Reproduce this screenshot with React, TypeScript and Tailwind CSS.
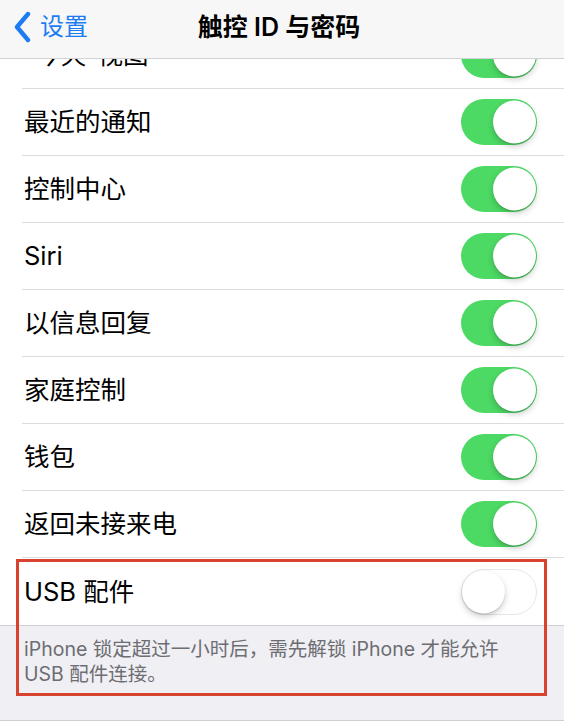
import React from 'react';

const rows: { label: string; on: boolean }[] = [
  { label: '“今天”视图', on: true },
  { label: '最近的通知', on: true },
  { label: '控制中心', on: true },
  { label: 'Siri', on: true },
  { label: '以信息回复', on: true },
  { label: '家庭控制', on: true },
  { label: '钱包', on: true },
  { label: '返回未接来电', on: true },
];

function Toggle({ on }: { on: boolean }) {
  return (
    <div
      className={`relative w-[76px] h-[46px] rounded-full ${
        on ? 'bg-[#4cd964]' : 'bg-white border-[1.5px] border-[#e6e6e6]'
      }`}
    >
      <div
        className={`absolute top-1/2 -translate-y-1/2 w-[43px] h-[43px] rounded-full bg-white shadow-[0_3px_6px_rgba(0,0,0,0.2),0_1px_1px_rgba(0,0,0,0.12)] ${
          on ? 'right-[1.5px]' : 'left-0'
        }`}
      />
    </div>
  );
}

function Row({ label, on }: { label: string; on: boolean }) {
  return (
    <div className="pl-[22px] bg-white">
      <div className="h-[67px] flex items-center justify-between pr-[27px] pl-[2px] border-b border-[#dcdcdf]">
        <span className="text-[25.5px] text-black leading-none">{label}</span>
        <Toggle on={on} />
      </div>
    </div>
  );
}

export default function App() {
  return (
    <div
      className="relative w-[564px] h-[726px] overflow-hidden bg-white flex flex-col"
      style={{ fontFamily: 'Inter, "Noto Sans CJK SC", sans-serif' }}
    >
      <div className="relative shrink-0 h-[59px] bg-[#f7f7f8] border-b border-[#d2d2d6] flex items-center pb-[4px]">
        <div className="absolute left-[13px] top-0 h-full pb-[4px] flex items-center gap-[9px] text-[#1d7cf2]">
          <svg width="18" height="32" viewBox="0 0 18 32" fill="none">
            <path d="M15 3 L4 16 L15 29" stroke="currentColor" strokeWidth="4.4" strokeLinecap="round" strokeLinejoin="round" />
          </svg>
          <span className="text-[24px] leading-none">设置</span>
        </div>
        <div className="w-full text-center text-[25px] font-semibold text-black leading-none pr-[6px]">
          触控 ID 与密码
        </div>
      </div>

      {/* list is scrolled, first row partly under the bar */}
      <div className="flex-1 overflow-hidden">
        <div className="-mt-[37px]">
          {rows.map((r) => (
            <Row key={r.label} label={r.label} on={r.on} />
          ))}
          <div className="bg-white border-b border-[#cfcfd3]">
            <div className="h-[67px] flex items-center justify-between pl-[24px] pr-[27px]">
              <span className="text-[25.5px] text-black leading-none">USB 配件</span>
              <Toggle on={false} />
            </div>
          </div>
          <div className="bg-[#efeff4] h-[95px] border-b border-[#cfcfd3] pl-[24px] pt-[11px] text-[19.5px] leading-[25px] text-[#6d6d72]">
            iPhone 锁定超过一小时后，需先解锁 iPhone 才能允许
            <br />
            USB 配件连接。
          </div>
        </div>
      </div>

      {/* highlight frame */}
      <div className="absolute left-[16px] top-[559px] w-[531px] h-[137px] border-[3px] border-[#d8432f] pointer-events-none" />
    </div>
  );
}
